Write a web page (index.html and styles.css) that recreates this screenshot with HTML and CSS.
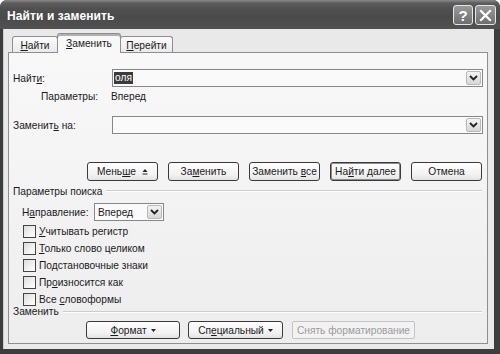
FILE: index.html
```html
<!DOCTYPE html>
<html lang="ru">
<head>
<meta charset="utf-8">
<title>Найти и заменить</title>
<link rel="stylesheet" href="styles.css">
</head>
<body>
<div class="window">
  <div class="titlebar">
    <span class="title">Найти и заменить</span>
    <div class="tb-btns">
      <span class="tb-btn help">?</span>
      <span class="tb-btn close"><svg width="13" height="13" viewBox="0 0 13 13"><path d="M2 2 L11 11 M11 2 L2 11" stroke="#fff" stroke-width="2.2" stroke-linecap="square"/></svg></span>
    </div>
  </div>
  <div class="client">
    <div class="tabs">
      <div class="tab"><span><u>Н</u>айти</span></div>
      <div class="tab active"><span><u>З</u>аменить</span></div>
      <div class="tab"><span><u>П</u>ерейти</span></div>
    </div>
    <div class="panel">
      <div class="field-row find-row">
        <span class="lbl">Найт<u>и</u>:</span>
        <div class="combo"><span class="sel">оля</span><span class="dd"><svg width="9" height="6" viewBox="0 0 9 6"><path d="M1 1 L4.5 4.5 L8 1" fill="none" stroke="#222" stroke-width="1.8"/></svg></span></div>
      </div>
      <div class="params-row">
        <span class="plabel">Параметры:</span><span>Вперед</span>
      </div>
      <div class="field-row replace-row">
        <span class="lbl">Заменит<u>ь</u> на:</span>
        <div class="combo"><span class="sel-empty"></span><span class="dd"><svg width="9" height="6" viewBox="0 0 9 6"><path d="M1 1 L4.5 4.5 L8 1" fill="none" stroke="#222" stroke-width="1.8"/></svg></span></div>
      </div>
      <div class="btn-row">
        <span class="btn"><span>Мень<u>ш</u>е</span><svg class="less" width="6" height="7" viewBox="0 0 6 7"><path d="M0.5 4 L3 1 L5.5 4 Z" fill="#222"/><path d="M0.5 6 H5.5" stroke="#222" stroke-width="1"/></svg></span>
        <span class="btn"><span>За<u>м</u>енить</span></span>
        <span class="btn"><span>Заменить <u>в</u>се</span></span>
        <span class="btn default"><span>На<u>й</u>ти далее</span></span>
        <span class="btn"><span>Отмена</span></span>
      </div>
      <div class="group-hdr"><span>Параметры поиска</span><span class="line"></span></div>
      <div class="dir-row">
        <span class="dir-lbl">Н<u>а</u>правление:</span>
        <div class="select"><span class="sel-text">Вперед</span><span class="dd"><svg width="9" height="6" viewBox="0 0 9 6"><path d="M1 1 L4.5 4.5 L8 1" fill="none" stroke="#222" stroke-width="1.8"/></svg></span></div>
      </div>
      <div class="checks">
        <div class="check"><span class="box"></span><span><u>У</u>читывать регистр</span></div>
        <div class="check"><span class="box"></span><span><u>Т</u>олько слово целиком</span></div>
        <div class="check"><span class="box"></span><span>Подстановочные знаки</span></div>
        <div class="check"><span class="box"></span><span>Пр<u>о</u>износится как</span></div>
        <div class="check"><span class="box"></span><span>Все <u>с</u>ловоформы</span></div>
      </div>
      <div class="group-hdr g2"><span>Заменить</span><span class="line"></span></div>
      <div class="btn-row2">
        <span class="btn b-format"><span><u>Ф</u>ормат</span><svg width="5" height="3" viewBox="0 0 5 3"><path d="M0 0 H5 L2.5 3 Z" fill="#222"/></svg></span>
        <span class="btn b-special"><span>Сп<u>е</u>циальный</span><svg width="5" height="3" viewBox="0 0 5 3"><path d="M0 0 H5 L2.5 3 Z" fill="#222"/></svg></span>
        <span class="btn b-clear disabled"><span>Снять форматирование</span></span>
      </div>
    </div>
  </div>
</div>
</body>
</html>
```

FILE: styles.css
```css
* { box-sizing: border-box; }
html, body { margin: 0; padding: 0; background: #fff; }
body { font-family: "Liberation Sans", Arial, sans-serif; font-size: 10.2px; color: #1a1a1a; }
u { text-decoration: underline; text-underline-offset: 1px; }

.window {
  width: 500px;
  height: 354px;
  background: #3d3d3d;
  border-radius: 7px 7px 0 0;
  display: flex;
  flex-direction: column;
  overflow: hidden;
}

.titlebar {
  height: 29px;
  flex: none;
  display: flex;
  align-items: center;
  justify-content: space-between;
  padding: 0 4px 0 7px;
  background: linear-gradient(#8a8a8a 0, #5e5e5e 3px, #505050 8px, #4a4a4a 60%, #525252 100%);
}
.title {
  color: #fff;
  font-weight: bold;
  font-size: 12px;
  letter-spacing: 0.1px;
  padding-top: 2px;
}
.tb-btns { display: flex; gap: 2px; padding-top: 1px; }
.tb-btn {
  width: 20px;
  height: 20px;
  border: 1px solid #e6e6e6;
  border-radius: 3px;
  background: linear-gradient(#9a9a9a, #6e6e6e);
  display: flex;
  align-items: center;
  justify-content: center;
  color: #fff;
}
.tb-btn.close { width: 21px; }
.tb-btn.help { font-weight: bold; font-size: 15px; line-height: 1; }

.client {
  flex: 1;
  margin: 0 6px 5px 3px;
  background: #e9e9e9;
  border-left: 1px solid #cfcfcf;
  padding: 4px 6px 5px 4px;
  display: flex;
  flex-direction: column;
}

.tabs {
  height: 19px;
  flex: none;
  display: flex;
  align-items: flex-end;
  padding-left: 4px;
  position: relative;
  z-index: 1;
}
.tab {
  height: 16px;
  border: 1px solid #8f8f8f;
  border-bottom: none;
  border-radius: 3px 3px 0 0;
  background: linear-gradient(#fbfbfb, #eaeaea);
  display: flex;
  align-items: center;
  justify-content: center;
  padding-top: 1px;
}
.tab:nth-child(1) { width: 46px; margin-right: -1px; }
.tab:nth-child(2) { width: 64px; }
.tab:nth-child(3) { width: 53px; margin-left: -1px; }
.tab.active {
  height: 20px;
  margin-bottom: -1px;
  background: #f8f8f8;
  box-shadow: inset 0 2px 0 #b0b0b0;
  position: relative;
  z-index: 2;
  padding-top: 0;
}

.panel {
  flex: 1;
  border: 1px solid #8f8f8f;
  background: linear-gradient(#f8f8f8 0, #f5f5f5 30%, #ededed 100%);
  padding: 0 4px;
  display: flex;
  flex-direction: column;
}

.field-row { display: flex; align-items: center; height: 18px; }
.find-row { margin-top: 16px; }
.replace-row { margin-top: 13px; }
.lbl { width: 99px; flex: none; padding-top: 1px; }

.combo {
  flex: 1;
  height: 18px;
  border: 1px solid #878787;
  background: #fafafa;
  display: flex;
  align-items: center;
  justify-content: space-between;
  padding: 0 1px 0 1px;
}
.sel {
  background: #3b3b3b;
  color: #fff;
  line-height: 12px;
  padding: 0 1px;
}
.dd {
  width: 15px;
  height: 14px;
  border: 1px solid #b9b9b9;
  border-radius: 2px;
  background: linear-gradient(#f4f4f4, #d6d6d6);
  display: flex;
  align-items: center;
  justify-content: center;
}

.params-row {
  margin-top: 2px;
  height: 14px;
  display: flex;
  align-items: center;
  padding-left: 28px;
}
.plabel { width: 70px; }

.btn-row {
  margin-top: 28px;
  height: 19px;
  display: flex;
  gap: 10px;
  padding-left: 74px;
}
.btn {
  height: 19px;
  border: 1px solid #3a3a3a;
  border-radius: 3px;
  background: linear-gradient(#ffffff, #f1f1f1 70%, #e2e2e2);
  display: flex;
  align-items: center;
  justify-content: center;
  gap: 4px;
  white-space: nowrap;
}
.btn-row .btn { width: 71px; }
.btn.default { box-shadow: inset 0 0 0 1px #8c8c8c; }
.less { margin-left: 2px; }

.group-hdr {
  margin-top: 4px;
  height: 12px;
  display: flex;
  align-items: center;
  gap: 4px;
  padding-right: 1px;
}
.group-hdr .line {
  flex: 1;
  height: 2px;
  border-top: 1px solid #cdcdcd;
  border-bottom: 1px solid #fdfdfd;
}

.dir-row {
  margin-top: 6px;
  height: 18px;
  display: flex;
  align-items: center;
  padding-left: 9px;
}
.dir-lbl { width: 72px; }
.select {
  width: 70px;
  height: 18px;
  border: 1px solid #878787;
  background: #fafafa;
  display: flex;
  align-items: center;
  justify-content: space-between;
  padding: 0 1px 0 3px;
}

.checks { margin-top: 2px; display: flex; flex-direction: column; padding-left: 10px; }
.check { height: 17px; display: flex; align-items: center; gap: 3px; }
.box {
  width: 13px;
  height: 13px;
  border: 1px solid #444;
  background: linear-gradient(135deg, #dcdcdc, #f6f6f6 70%, #fff);
}

.g2 { margin-top: -2px; height: 11px; }

.btn-row2 {
  margin-top: 4px;
  height: 18px;
  display: flex;
  padding-left: 73px;
}
.btn-row2 .btn { height: 18px; }
.b-format { width: 94px; }
.b-special { width: 95px; margin-left: 8px; }
.b-clear { width: 123px; margin-left: 9px; }
.btn.disabled {
  border-color: #c4c4c4;
  border-radius: 2px;
  background: #f2f2f2;
  color: #9a9a9a;
}
```
